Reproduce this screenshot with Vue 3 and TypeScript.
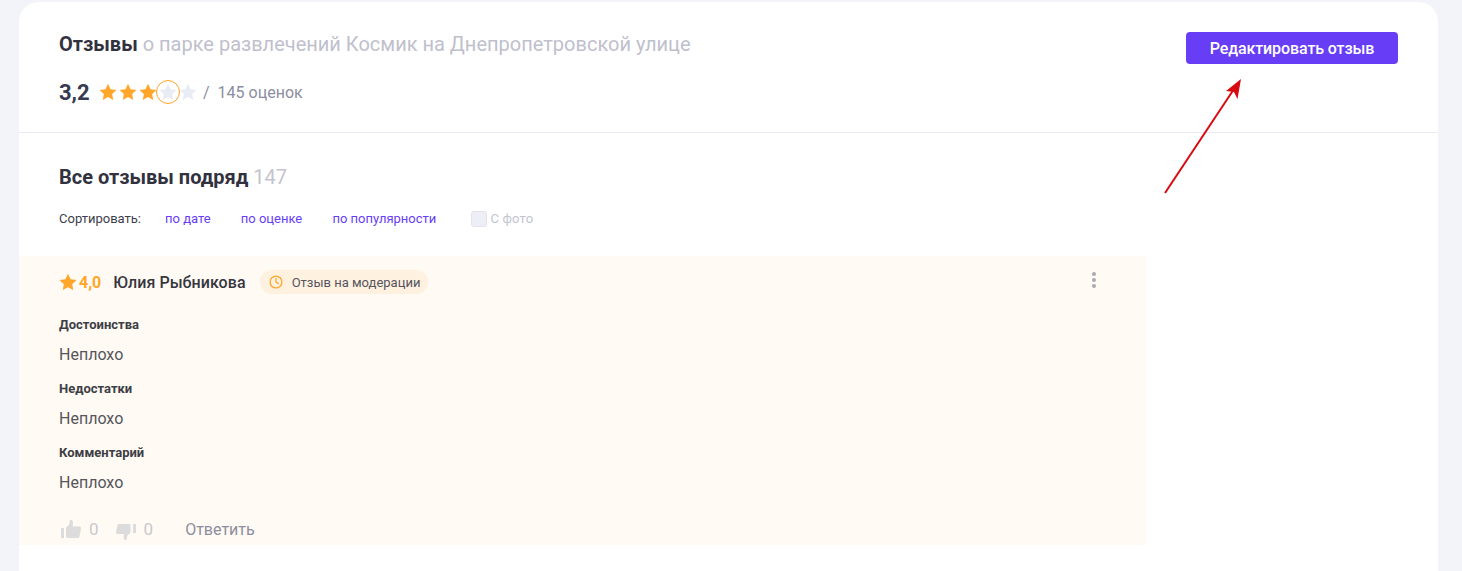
<script setup lang="ts">
const starPath = 'M8 .6l2.3 4.9 5.3.7-3.9 3.7 1 5.3L8 12.6l-4.7 2.6 1-5.3L.4 6.2l5.3-.7z'
const stars = ['#ffa62b', '#ffa62b', '#ffa62b', '#e9ebf5', '#e9ebf5']
const sorts = ['по дате', 'по оценке', 'по популярности']
const sections = ['Достоинства', 'Недостатки', 'Комментарий']
</script>

<template>
  <div class="page">
    <main class="card">
      <header class="head">
        <div>
          <h1 class="title"><b>Отзывы</b> о парке развлечений Космик на Днепропетровской улице</h1>
          <div class="rating">
            <span class="score">3,2</span>
            <span class="stars">
              <svg v-for="(c, i) in stars" :key="i" width="20" height="20" viewBox="-1 -1 18 18"><path :d="starPath" :fill="c" /></svg>
              <i class="ring"></i>
            </span>
            <span class="count"><span class="slash">/</span>145 оценок</span>
          </div>
        </div>
        <button class="edit" type="button">Редактировать отзыв</button>
      </header>

      <section class="reviews">
        <h2 class="subtitle">Все отзывы подряд <span>147</span></h2>
        <div class="sort">
          <span class="sort-label">Сортировать:</span>
          <a v-for="s in sorts" :key="s" class="sort-link">{{ s }}</a>
          <label class="photo"><i class="box"></i>С фото</label>
        </div>

        <article class="review">
          <div class="review-top">
            <svg width="18" height="18" viewBox="0 0 16 16"><path :d="starPath" fill="#ffa62b" /></svg>
            <span class="mark">4,0</span>
            <span class="author">Юлия Рыбникова</span>
            <span class="badge">
              <svg width="14" height="14" viewBox="0 0 14 14" fill="none" stroke="#ffa62b" stroke-width="1.3"><circle cx="7" cy="7" r="5.9" /><path d="M7 3.6V7l2.4 1.6" stroke-linecap="round" /></svg>
              Отзыв на модерации
            </span>
            <span class="more"><i></i><i></i><i></i></span>
          </div>
          <div v-for="s in sections" :key="s" class="block">
            <div class="block-title">{{ s }}</div>
            <div class="block-text">Неплохо</div>
          </div>
          <div class="actions">
            <svg class="up" width="20" height="18" viewBox="0 0 20 18" fill="#dcdcdc"><path d="M0 8h3v10H0zM5 8l3.600-4V1.300C8.600.4 9.300 0 10 0c1.600.3 2.200 1.700 2 3.200L11.500 6.500H18.300c1.200 0 1.900.9 1.700 2l-1.500 8c-.2.900-.9 1.500-1.900 1.500H7c-1.200 0-2-.8-2-1.800z" /></svg>
            <span class="num">0</span>
            <svg class="down" width="20" height="16" viewBox="0 0 20 16" fill="#dcdcdc"><path d="M17 0h3v9h-3zM14.500 8.500L11 12v2.500c0 .8-.7 1.500-1.500 1.500-1.300-.4-2-1.500-1.800-2.800L8 10H1.700C.6 10-.2 9.200 0 8L1.300 1.700C1.500.7 2.300 0 3.300 0H13c1 0 1.500.6 1.500 1.500z" /></svg>
            <span class="num">0</span>
            <span class="reply">Ответить</span>
          </div>
        </article>
      </section>
    </main>

    <svg class="arrow" width="90" height="125" viewBox="0 0 90 125">
      <path d="M3 119L72 15" stroke="#d60a10" stroke-width="2" fill="none" />
      <path d="M79 5L75.500 25 72 18 64 17z" fill="#d60a10" />
    </svg>
  </div>
</template>

<style>
html, body { margin: 0; background: #f3f4f9; overflow: hidden; }
</style>

<style scoped>
.page {
  position: relative;
  height: 571px;
  overflow: hidden;
  padding: 2px 24px 0 19px;
  box-sizing: border-box;
  font-family: Roboto, "Liberation Sans", sans-serif;
  color: #32323f;
}
.card {
  background: #fff;
  border-radius: 20px 20px 0 0;
  height: 600px;
}
.head {
  display: flex;
  justify-content: space-between;
  align-items: flex-start;
  height: 131px;
  padding: 30px 40px 0;
  box-sizing: border-box;
  border-bottom: 1px solid #e9e9f4;
}
.title {
  margin: 0;
  font-size: 20px;
  line-height: 24px;
  font-weight: 400;
  color: #bfc0cd;
}
.title b { font-weight: 700; color: #32323f; font-size: 20px; }
.rating { display: flex; align-items: center; margin-top: 23px; height: 26px; }
.score { font-size: 22px; font-weight: 700; color: #363a51; width: 39px; }
.stars { position: relative; display: flex; width: 102px; }
.ring {
  position: absolute;
  left: 58px;
  top: -2px;
  width: 22px;
  height: 22px;
  border: 1px solid #ffa62b;
  border-radius: 50%;
}
.count { font-size: 16px; color: #8c8d9f; margin-left: 3px; }
.slash { margin-right: 8px; }
.edit {
  width: 212px;
  height: 32px;
  border: 0;
  border-radius: 4px;
  background: #673df6;
  color: #fff;
  font: 500 16px Roboto, sans-serif;
  letter-spacing: -0.1px;
}
.reviews { padding-top: 32px; }
.subtitle {
  margin: 0 40px;
  font-size: 20px;
  line-height: 24px;
  font-weight: 700;
  color: #32323f;
}
.subtitle span { font-weight: 400; color: #c3c4d0; }
.sort {
  display: flex;
  align-items: center;
  margin: 21px 40px 0;
  height: 17px;
  font-size: 13px;
}
.sort-label { color: #3e3e4a; margin-right: 24px; }
.sort-link { color: #673df6; margin-right: 30.2px; }
.photo { display: flex; align-items: center; color: #c3c4d0; margin-left: 4px; letter-spacing: 0.15px; }
.box {
  width: 14px;
  height: 14px;
  margin-right: 4px;
  background: #eeeef7;
  border: 1px solid #e3e3ee;
  border-radius: 3px;
}
.review {
  width: 1127px;
  height: 289px;
  margin-top: 29px;
  padding: 14px 40px 0;
  box-sizing: border-box;
  background: #fffaf3;
}
.review-top { display: flex; align-items: center; height: 24px; margin-bottom: 12px; }
.mark { margin-left: 2px; color: #ffa62b; font-size: 16px; font-weight: 700; }
.author { margin-left: 12px; font-size: 16px; font-weight: 500; color: #36363f; letter-spacing: 0.07px; }
.badge {
  display: flex;
  align-items: center;
  gap: 9px;
  height: 24px;
  margin-left: 14px;
  padding: 0 8px 0 9px;
  border-radius: 12px;
  background: #fff1df;
  font-size: 13px;
  color: #55555f;
}
.more { display: flex; flex-direction: column; gap: 2px; margin-left: auto; margin-right: 10px; margin-top: -5px; }
.more i { width: 4px; height: 4px; border-radius: 50%; background: #a9a9b5; }
.block { height: 64px; }
.block-title { padding-top: 11px; font-size: 13px; line-height: 16px; font-weight: 700; color: #3e3e46; }
.block-text { margin-top: 12px; font-size: 16px; line-height: 20px; color: #55555c; }
.actions { display: flex; align-items: center; margin-top: 19px; height: 24px; font-size: 17px; }
.up { margin-left: 2px; }
.num { margin-left: 8px; color: #c9c9cf; }
.down { margin-left: 17px; margin-top: 5px; }
.reply { margin-left: 32px; font-size: 16px; color: #8c8d9f; }
.arrow { position: absolute; left: 1162px; top: 74px; }
</style>
